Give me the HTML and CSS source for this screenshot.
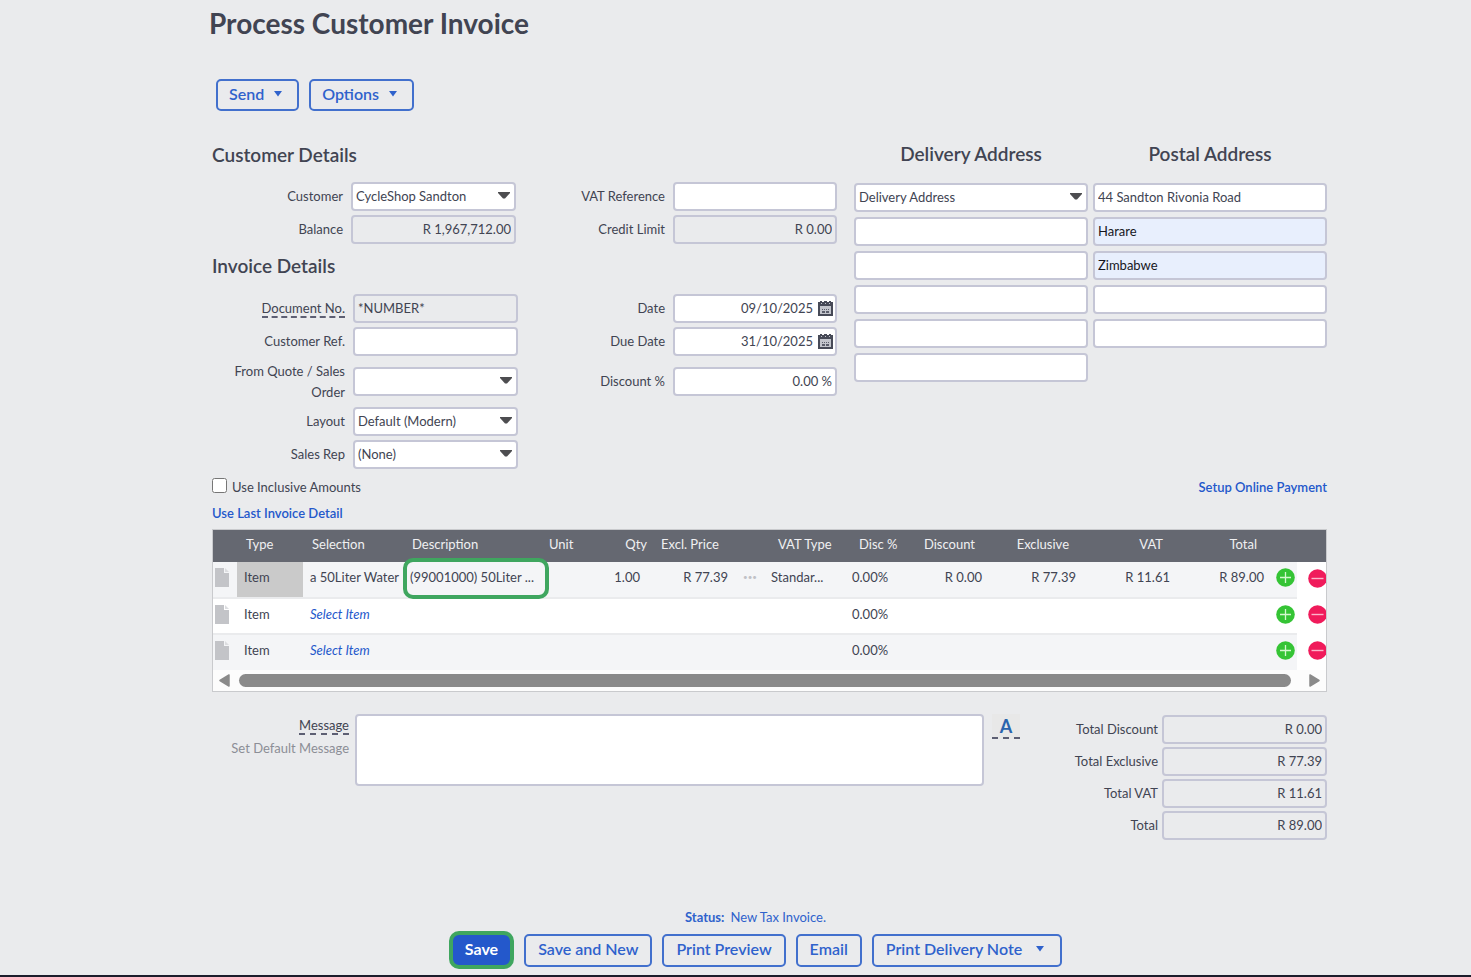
FILE: index.html
```html
<!DOCTYPE html>
<html lang="en">
<head>
<meta charset="utf-8">
<title>Process Customer Invoice</title>
<link rel="stylesheet" href="styles.css">
</head>
<body>
<svg width="0" height="0" class="sprite" aria-hidden="true">
  <symbol id="caret" viewBox="0 0 12 7"><path d="M0 0h12v1L7 6.500H5L0 1z" fill="#4d4d50"/></symbol>
  <symbol id="small-caret" viewBox="0 0 8 6"><path d="M0 0h8L4 5.500z" fill="currentColor"/></symbol>
  <symbol id="page" viewBox="0 0 14 19"><path d="M0 0h9v5h5v14H0z" fill="#c3c4c8"/><path d="M10 0v4h4z" fill="#dcdde0"/></symbol>
  <symbol id="plus" viewBox="0 0 19 19"><circle cx="9.500" cy="9.500" r="9.300" fill="#35c435"/><path d="M9.500 4v11M4 9.500h11" stroke="#d5f8cf" stroke-width="1.300"/></symbol>
  <symbol id="minus" viewBox="0 0 19 19"><circle cx="9.500" cy="9.500" r="9.300" fill="#f01b5b"/><path d="M3.500 9.500h12" stroke="#fcb5ca" stroke-width="1.400"/></symbol>
  <symbol id="calendar" viewBox="0 0 15 15"><path d="M0 1h2V0h2v1h2V0h3v1h2V0h2v1h2v14H0z" fill="#474a57"/><path d="M2 5h11v8H2z" fill="#c3c5cc"/><path d="M4 8h1v1H4zM6 8h1v1H6zM8 8h1v1H8zM10 8h1v1h-1zM4 10h3v2H4zM8 10h3v2H8z" fill="#5b5e6b"/><path d="M3 2h1v1H3zM7 2h1v1H7zM11 2h1v1h-1z" fill="#c3c5cc"/></symbol>
</svg>
<main class="page">
  <header class="header">
    <h1 class="title">Process Customer Invoice</h1>
    <div class="toolbar">
      <button class="btn btn-menu">Send<svg class="btn-caret"><use href="#small-caret"/></svg></button>
      <button class="btn btn-menu">Options<svg class="btn-caret"><use href="#small-caret"/></svg></button>
    </div>
  </header>

  <div class="body">
    <section class="details">
      <div class="forms">
        <h2 class="heading">Customer Details</h2>
        <div class="form customer-form">
          <label for="customer">Customer</label>
          <div class="select-wrap"><select class="field" id="customer"><option>CycleShop Sandton</option></select><svg class="caret"><use href="#caret"/></svg></div>
          <label for="vatref">VAT Reference</label>
          <input class="field" id="vatref" type="text">
          <label for="balance">Balance</label>
          <input class="field readonly num" id="balance" type="text" value="R 1,967,712.00" readonly>
          <label for="limit">Credit Limit</label>
          <input class="field readonly num" id="limit" type="text" value="R 0.00" readonly>
        </div>
        <h2 class="heading heading-invoice">Invoice Details</h2>
        <div class="form invoice-form">
          <label for="docno"><span class="hint">Document No.</span></label>
          <input class="field readonly" id="docno" type="text" value="*NUMBER*" readonly>
          <label for="date">Date</label>
          <div class="date-wrap"><input class="field num" id="date" type="text" value="09/10/2025"><svg class="calendar"><use href="#calendar"/></svg></div>
          <label for="custref">Customer Ref.</label>
          <input class="field" id="custref" type="text">
          <label for="due">Due Date</label>
          <div class="date-wrap"><input class="field num" id="due" type="text" value="31/10/2025"><svg class="calendar"><use href="#calendar"/></svg></div>
          <label class="two-line" for="quote">From Quote / Sales Order</label>
          <div class="select-wrap"><select class="field" id="quote"><option></option></select><svg class="caret"><use href="#caret"/></svg></div>
          <label for="discount">Discount %</label>
          <input class="field num" id="discount" type="text" value="0.00 %">
          <label for="layout">Layout</label>
          <div class="select-wrap"><select class="field" id="layout"><option>Default (Modern)</option></select><svg class="caret"><use href="#caret"/></svg></div>
          <span></span><span></span>
          <label for="rep">Sales Rep</label>
          <div class="select-wrap"><select class="field" id="rep"><option>(None)</option></select><svg class="caret"><use href="#caret"/></svg></div>
        </div>
      </div>
      <div class="address delivery">
        <h2 class="heading">Delivery Address</h2>
        <div class="select-wrap"><select class="field" aria-label="Delivery Address"><option>Delivery Address</option></select><svg class="caret"><use href="#caret"/></svg></div>
        <input class="field" type="text" aria-label="Delivery line 1">
        <input class="field" type="text" aria-label="Delivery line 2">
        <input class="field" type="text" aria-label="Delivery line 3">
        <input class="field" type="text" aria-label="Delivery line 4">
        <input class="field" type="text" aria-label="Delivery line 5">
      </div>
      <div class="address">
        <h2 class="heading">Postal Address</h2>
        <input class="field" type="text" aria-label="Postal line 1" value="44 Sandton Rivonia Road">
        <input class="field autofilled" type="text" aria-label="Postal line 2" value="Harare">
        <input class="field autofilled" type="text" aria-label="Postal line 3" value="Zimbabwe">
        <input class="field" type="text" aria-label="Postal line 4">
        <input class="field" type="text" aria-label="Postal line 5">
      </div>
    </section>

    <div class="options-row">
      <label class="check"><input type="checkbox">Use Inclusive Amounts</label>
      <a class="link" href="#">Setup Online Payment</a>
    </div>
    <div class="last-row"><a class="link" href="#">Use Last Invoice Detail</a></div>

    <div class="grid-box">
      <table class="lines">
        <colgroup><col class="w24"><col class="w66"><col class="w100"><col><col class="w60"><col class="w52"><col class="w88"><col class="w24"><col class="w81"><col class="w55"><col class="w94"><col class="w94"><col class="w94"><col class="w94"><col class="w21"><col class="w29"></colgroup>
        <thead>
          <tr><th></th><th>Type</th><th>Selection</th><th>Description</th><th>Unit</th><th class="qty">Qty</th><th>Excl. Price</th><th></th><th class="inset">VAT Type</th><th class="inset">Disc %</th><th class="num">Discount</th><th class="num">Exclusive</th><th class="num">VAT</th><th class="num">Total</th><th></th><th></th></tr>
        </thead>
        <tbody>
          <tr>
            <td class="icon"><svg class="page-icon"><use href="#page"/></svg></td>
            <td class="active">Item</td><td>a 50Liter Water</td>
            <td class="marked">(99001000) 50Liter ...</td>
            <td></td><td class="num">1.00</td><td class="num">R 77.39</td><td class="dots">•••</td><td>Standar...</td><td>0.00%</td><td class="num">R 0.00</td><td class="num">R 77.39</td><td class="num">R 11.61</td><td class="num">R 89.00</td>
            <td class="add"><button class="round" aria-label="Add line"><svg><use href="#plus"/></svg></button></td>
            <td class="remove"><button class="round" aria-label="Remove line"><svg><use href="#minus"/></svg></button></td>
          </tr>
          <tr>
            <td class="icon"><svg class="page-icon"><use href="#page"/></svg></td>
            <td>Item</td><td><a class="select-item" href="#">Select Item</a></td><td></td><td></td><td></td><td></td><td></td><td></td><td>0.00%</td><td></td><td></td><td></td><td></td>
            <td class="add"><button class="round" aria-label="Add line"><svg><use href="#plus"/></svg></button></td>
            <td class="remove"><button class="round" aria-label="Remove line"><svg><use href="#minus"/></svg></button></td>
          </tr>
          <tr>
            <td class="icon"><svg class="page-icon"><use href="#page"/></svg></td>
            <td>Item</td><td><a class="select-item" href="#">Select Item</a></td><td></td><td></td><td></td><td></td><td></td><td></td><td>0.00%</td><td></td><td></td><td></td><td></td>
            <td class="add"><button class="round" aria-label="Add line"><svg><use href="#plus"/></svg></button></td>
            <td class="remove"><button class="round" aria-label="Remove line"><svg><use href="#minus"/></svg></button></td>
          </tr>
        </tbody>
      </table>
      <div class="scrollbar">
        <svg class="scroll-arrow" viewBox="0 0 11 13"><path d="M10 1v11L1 6.500z" fill="#8a8a8a" stroke="#8a8a8a" stroke-width="1.500" stroke-linejoin="round"/></svg>
        <div class="thumb"></div>
        <svg class="scroll-arrow" viewBox="0 0 11 13"><path d="M1 1v11l9-5.500z" fill="#8a8a8a" stroke="#8a8a8a" stroke-width="1.500" stroke-linejoin="round"/></svg>
      </div>
    </div>

    <section class="summary">
      <div class="message-labels">
        <label for="message"><span class="hint">Message</span></label>
        <a class="muted" href="#">Set Default Message</a>
      </div>
      <textarea class="message" id="message"></textarea>
      <button class="format" aria-label="Format message"><span class="letter">A</span></button>
      <div class="totals">
        <label for="t-disc">Total Discount</label><input class="field readonly num" id="t-disc" type="text" value="R 0.00" readonly>
        <label for="t-excl">Total Exclusive</label><input class="field readonly num" id="t-excl" type="text" value="R 77.39" readonly>
        <label for="t-vat">Total VAT</label><input class="field readonly num" id="t-vat" type="text" value="R 11.61" readonly>
        <label for="t-total">Total</label><input class="field readonly num" id="t-total" type="text" value="R 89.00" readonly>
      </div>
    </section>
  </div>

  <footer class="footer">
    <p class="status"><b>Status:</b><span>New Tax Invoice.</span></p>
    <div class="actions">
      <button class="btn btn-primary">Save</button>
      <button class="btn">Save and New</button>
      <button class="btn">Print Preview</button>
      <button class="btn">Email</button>
      <button class="btn btn-menu">Print Delivery Note<svg class="btn-caret"><use href="#small-caret"/></svg></button>
    </div>
  </footer>
</main>
</body>
</html>
```

FILE: styles.css
```css
* { box-sizing: border-box; }
body {
  margin: 0;
  background: #eaebed;
  color: #414452;
  font: 13px/21px Lato, "Liberation Sans", sans-serif;
}
input, select, button, textarea { font: inherit; color: inherit; margin: 0; }
a { text-decoration: none; }
.sprite { position: absolute; }

.page {
  min-height: 100vh;
  display: flex;
  flex-direction: column;
  border-bottom: 2px solid #1c1c2b;
}
.header { padding: 6px 144px 0 209px; }
.title { margin: 0; font-size: 28px; line-height: 34px; font-weight: 700; }
.toolbar { display: flex; gap: 10px; margin-top: 39px; padding-left: 7px; }

.btn {
  height: 33px;
  padding: 0 11px 2px;
  border: 2px solid #4270cd;
  border-radius: 5px;
  background: transparent;
  color: #2f62cc;
  font-size: 16px;
  line-height: 20px;
  font-weight: 600;
  white-space: nowrap;
}
.toolbar .btn { height: 32px; }
.btn-menu { display: flex; align-items: center; gap: 10px; padding-right: 15px; }
.btn-caret { width: 8px; height: 6px; }

.body { padding: 32px 144px 0 212px; }
.details { display: grid; grid-template-columns: 625px minmax(0, 246fr) minmax(0, 234fr); column-gap: 5px; }
.heading { margin: 0; font-size: 19px; line-height: 24px; font-weight: 600; }
.form { display: grid; column-gap: 8px; align-items: center; grid-auto-rows: 33px; }
.form label, .totals label { text-align: right; white-space: nowrap; }
.customer-form { grid-template-columns: 131px 165px 1fr 164px; margin-top: 13px; }
.heading-invoice { margin-top: 8px; }
.invoice-form {
  grid-template-columns: 133px 165px 1fr 164px;
  grid-template-rows: 33px 33px 47px;
  margin-top: 14px;
}
.form .two-line { padding-left: 16px; white-space: normal; }
.hint { border-bottom: 2px dashed #5d5f73; }

.field {
  display: block;
  width: 100%;
  height: 29px;
  padding: 0 3px 2px;
  border: 2px solid #c5c6d6;
  border-radius: 4px;
  background: #fff;
  outline: 0;
  appearance: none;
}
select.field { padding-bottom: 0; }
.select-wrap, .date-wrap { position: relative; }
.caret { position: absolute; right: 6px; top: 10px; width: 12px; height: 7px; pointer-events: none; }
.calendar { position: absolute; right: 4px; top: 7px; width: 15px; height: 15px; }
.readonly { background: #eaebed; }
.num { text-align: right; }
.date-wrap .field { padding-right: 22px; }
.autofilled { background: #e8effd; color: #16161c; }

.address { display: flex; flex-direction: column; gap: 5px; }
.delivery { margin-left: 12px; }
.address .heading { text-align: center; line-height: 22px; margin-bottom: 13px; }

.options-row { display: flex; justify-content: space-between; margin-top: 6px; }
.check { display: flex; align-items: center; gap: 5px; }
.check input { width: 15px; height: 15px; margin-bottom: 4px; }
.link { color: #2458cb; font-weight: 600; }
.last-row { margin-top: 5px; }

.grid-box { margin-top: 5px; border: 1px solid #c9cacd; background: #fcfcfc; overflow: hidden; }
.lines { width: 100%; table-layout: fixed; border-collapse: collapse; white-space: nowrap; }
.w21 { width: 21px; } .w24 { width: 24px; } .w29 { width: 29px; } .w52 { width: 52px; }
.w55 { width: 55px; } .w60 { width: 60px; } .w66 { width: 66px; } .w81 { width: 81px; }
.w88 { width: 88px; } .w94 { width: 94px; } .w100 { width: 100px; }
.lines th {
  height: 32px;
  padding: 0 0 4px 9px;
  background: #656871;
  color: #f0f0f2;
  font-weight: 400;
  text-align: left;
}
.lines th.num { padding-right: 19px; text-align: right; }
.lines th.qty { padding-right: 5px; text-align: right; }
.lines th.inset { padding-left: 14px; }
.lines td { height: 36px; padding: 0 0 4px 7px; background: #f4f5f7; border-bottom: 2px solid #eaebed; }
.lines td.num { padding-right: 12px; }
.lines tr:nth-child(2) td { background: #fff; }
.lines tr:last-child td { border-bottom: 0; }
.lines tbody td.remove { background: #fff; border-bottom: 0; padding: 0 0 4px 11px; }
.lines td.icon, .lines td.add { padding: 0 0 4px; }
.lines td.icon { padding-left: 2px; }
.lines .page-icon { display: block; width: 14px; height: 19px; }
.lines td.active { background: #cacaca; }
.lines td.dots { padding-left: 3px; font-size: 8px; color: #c0c1c6; }
.lines td.marked { position: relative; }
.marked::after {
  content: "";
  position: absolute;
  inset: -4px -9px -2px 0;
  border: 4px solid #3fa65f;
  border-radius: 10px;
}
.select-item { color: #2458cb; font-style: italic; }
.round { display: block; width: 19px; height: 19px; padding: 0; border: 0; background: none; }
.round svg { display: block; width: 19px; height: 19px; }
.scrollbar { display: flex; align-items: center; gap: 9px; height: 21px; padding: 0 6px 1px; }
.scroll-arrow { width: 11px; height: 13px; flex: none; }
.thumb { flex: 1; height: 13px; margin-right: 9px; border-radius: 7px; background: #8a8a8a; }

.summary { display: flex; margin-top: 22px; }
.message-labels { width: 137px; margin-right: 6px; padding-top: 1px; text-align: right; }
.message-labels label, .message-labels a { display: block; margin-bottom: 2px; }
.muted { color: #8c8e96; }
.message {
  flex: 1;
  height: 72px;
  border: 2px solid #c5c6d6;
  border-radius: 4px;
  background: #fff;
  resize: none;
}
.format {
  width: 28px;
  height: 25px;
  margin: 0 56px 0 8px;
  padding: 2px 0 0;
  border: 0;
  border-bottom: 2px dashed #5d5f73;
  background: #e8e8e8;
}
.letter { color: #2a64ad; font-size: 18px; line-height: 21px; font-weight: 700; }
.totals { display: grid; grid-template-columns: 82px 165px; column-gap: 4px; row-gap: 3px; margin-top: 1px; align-items: center; }
.totals label { justify-self: end; }

.footer { margin-top: auto; padding: 0 144px 6px 184px; text-align: center; color: #2f62cc; }
.status { display: flex; justify-content: center; gap: 6px; margin: 0 0 3px; }
.actions { display: flex; justify-content: center; align-items: center; gap: 10px; }
.actions .btn { padding-left: 12px; padding-right: 12px; }
.actions .btn-menu { padding-right: 16px; gap: 14px; }
.actions .btn-primary {
  height: 38px;
  border: 4px solid #3fa65f;
  border-radius: 10px;
  background: #2458cb;
  color: #fff;
  font-weight: 700;
}
```
